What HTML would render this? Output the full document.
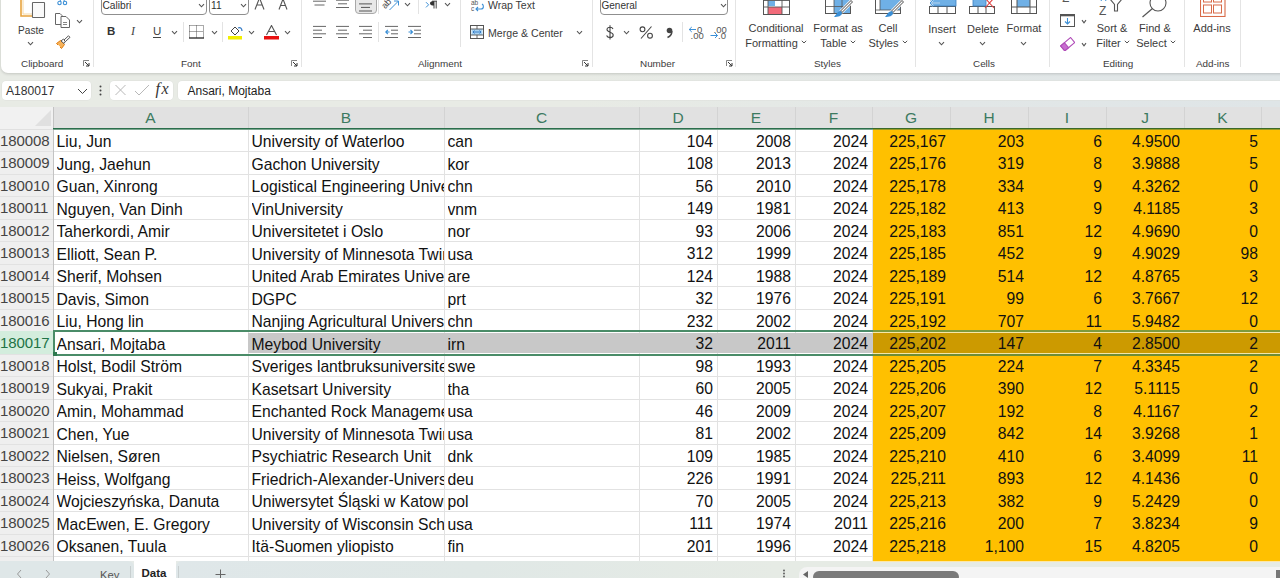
<!DOCTYPE html><html><head><meta charset="utf-8"><title>Excel</title><style>
*{box-sizing:border-box;margin:0;padding:0}
html,body{width:1280px;height:578px;overflow:hidden;background:linear-gradient(90deg,#e8ebe5 0%,#e8ebe5 45%,#e2e7e7 75%,#dfe5e7 100%);font-family:"Liberation Sans",sans-serif;}
.a{position:absolute}
.rib{position:absolute;left:1px;top:-10px;width:1290px;height:82.5px;background:#fff;border-radius:0 0 7px 7px;box-shadow:0 1px 3px rgba(0,0,0,.16)}
.lbl{position:absolute;font-size:9.9px;color:#3b3b3b;white-space:nowrap;line-height:12px}
.bl{position:absolute;font-size:11px;color:#3b3b3b;white-space:nowrap;line-height:13px;text-align:center}
.sep{position:absolute;width:1px;background:#e4e4e4}
.chev{position:absolute}
.cell{position:absolute;white-space:nowrap;overflow:hidden;font-size:15.7px;color:#111;line-height:22px}
.num{text-align:right}
.ctr{text-align:center}
.rh{position:absolute;left:0;width:53px;font-size:15px;color:#444;line-height:22px;text-align:left;padding-left:0;letter-spacing:-0.1px;white-space:nowrap}
.ch{position:absolute;top:107px;height:21px;font-size:15.5px;color:#3c7a60;line-height:21px;text-align:center}
</style></head><body>
<div class="rib"></div>
<div class="sep" style="left:93px;top:0;height:67px"></div>
<div class="sep" style="left:301px;top:0;height:67px"></div>
<div class="sep" style="left:592px;top:0;height:67px"></div>
<div class="sep" style="left:735px;top:0;height:67px"></div>
<div class="sep" style="left:915px;top:0;height:67px"></div>
<div class="sep" style="left:1049px;top:0;height:67px"></div>
<div class="sep" style="left:1184px;top:0;height:67px"></div>
<div class="sep" style="left:1240px;top:0;height:67px"></div>
<div class="sep" style="left:183px;top:22px;height:20px;background:#e3e3e3"></div>
<div class="sep" style="left:222px;top:22px;height:20px;background:#e3e3e3"></div>
<div class="sep" style="left:378px;top:0px;height:14px;background:#e3e3e3"></div>
<div class="sep" style="left:378px;top:22px;height:20px;background:#e3e3e3"></div>
<div class="sep" style="left:418px;top:0px;height:14px;background:#e3e3e3"></div>
<div class="sep" style="left:460px;top:0px;height:47px;background:#e3e3e3"></div>
<div class="sep" style="left:682px;top:22px;height:20px;background:#e3e3e3"></div>
<div class="lbl" style="left:21px;top:58px">Clipboard</div>
<div class="lbl" style="left:181px;top:58px">Font</div>
<div class="lbl" style="left:418px;top:58px">Alignment</div>
<div class="lbl" style="left:640px;top:58px">Number</div>
<div class="lbl" style="left:814px;top:58px">Styles</div>
<div class="lbl" style="left:973px;top:58px">Cells</div>
<div class="lbl" style="left:1103px;top:58px">Editing</div>
<div class="lbl" style="left:1196px;top:58px">Add-ins</div>
<svg class="a" style="left:83px;top:60px" width="7" height="7" viewBox="0 0 7 7"><path d="M0.5 6V0.5H6" fill="none" stroke="#777" stroke-width="0.9"/><path d="M2 2L6 6M6 3V6H3" fill="none" stroke="#333" stroke-width="1"/></svg>
<svg class="a" style="left:291px;top:60px" width="7" height="7" viewBox="0 0 7 7"><path d="M0.5 6V0.5H6" fill="none" stroke="#777" stroke-width="0.9"/><path d="M2 2L6 6M6 3V6H3" fill="none" stroke="#333" stroke-width="1"/></svg>
<svg class="a" style="left:582px;top:60px" width="7" height="7" viewBox="0 0 7 7"><path d="M0.5 6V0.5H6" fill="none" stroke="#777" stroke-width="0.9"/><path d="M2 2L6 6M6 3V6H3" fill="none" stroke="#333" stroke-width="1"/></svg>
<svg class="a" style="left:726px;top:60px" width="7" height="7" viewBox="0 0 7 7"><path d="M0.5 6V0.5H6" fill="none" stroke="#777" stroke-width="0.9"/><path d="M2 2L6 6M6 3V6H3" fill="none" stroke="#333" stroke-width="1"/></svg>
<svg class="a" style="left:18px;top:0" width="30" height="20" viewBox="0 0 30 20"><path d="M3 0V16H14" fill="none" stroke="#e8a33d" stroke-width="1.6"/><path d="M5 -2V14H14" fill="none" stroke="#f6d9a6" stroke-width="1"/><rect x="14.5" y="2.5" width="12" height="15" fill="#fff" stroke="#666" stroke-width="1.1" rx="0.5"/><rect x="15.5" y="3.5" width="10" height="13" fill="#fafafa"/></svg>
<div class="bl" style="left:17px;top:23.5px;width:28px;font-size:10.1px">Paste</div>
<svg class="a" style="left:27px;top:41px" width="7" height="5" viewBox="0 0 7 5"><path d="M1 1.2 L3.5 3.8 L6 1.2" fill="none" stroke="#555" stroke-width="1.1"/></svg>
<svg class="a" style="left:57px;top:0" width="11" height="6" viewBox="0 0 11 6"><circle cx="2.5" cy="3" r="1.7" fill="none" stroke="#3b8fd6" stroke-width="1.1"/><circle cx="8" cy="3" r="1.7" fill="none" stroke="#3b8fd6" stroke-width="1.1"/><path d="M3 0L4 1.5M7.5 0L6.5 1.5" stroke="#3b8fd6" stroke-width="1"/></svg>
<svg class="a" style="left:55px;top:13px" width="16" height="15" viewBox="0 0 16 15"><path d="M0.5 0.5H5L7 2.5V11.5H0.5Z" fill="#fff" stroke="#666" stroke-width="1"/><path d="M6 3.5H11L14.5 7V14.5H6Z" fill="#fff" stroke="#666" stroke-width="1"/><path d="M8 9.5H12M8 11.5H12" stroke="#777" stroke-width="0.9"/></svg>
<svg class="a" style="left:76px;top:19px" width="7" height="5" viewBox="0 0 7 5"><path d="M1 1.2 L3.5 3.8 L6 1.2" fill="none" stroke="#555" stroke-width="1.1"/></svg>
<svg class="a" style="left:55px;top:35px" width="16" height="15" viewBox="0 0 16 15"><path d="M1.5 8.5L6.5 13.5L9.5 9.5L5.5 5.5Z" fill="#f6b25a" stroke="#e07d10" stroke-width="1"/><path d="M3 10L5 12" stroke="#fff" stroke-width="0.9"/><path d="M6 6L8.5 4L10.5 6L9 8.5Z" fill="#fff" stroke="#555" stroke-width="1"/><path d="M9 5L13.5 0.8L15 2.3L10.5 6.5Z" fill="#fff" stroke="#555" stroke-width="1"/></svg>
<div class="a" style="left:101px;top:-6px;width:106px;height:20.5px;border:1px solid #8f8f8f;border-radius:4px;background:#fff"></div>
<div class="a" style="left:102.5px;top:-1.5px;font-size:10.2px;color:#333;line-height:13px">Calibri</div>
<svg class="a" style="left:198px;top:3px" width="7" height="5" viewBox="0 0 7 5"><path d="M1 1.2 L3.5 3.8 L6 1.2" fill="none" stroke="#555" stroke-width="1.1"/></svg>
<div class="a" style="left:209px;top:-6px;width:40px;height:20.5px;border:1px solid #8f8f8f;border-radius:4px;background:#fff"></div>
<div class="a" style="left:211px;top:-1.5px;font-size:10.2px;color:#333;line-height:13px">11</div>
<svg class="a" style="left:240px;top:3px" width="7" height="5" viewBox="0 0 7 5"><path d="M1 1.2 L3.5 3.8 L6 1.2" fill="none" stroke="#555" stroke-width="1.1"/></svg>
<svg class="a" style="left:254px;top:0" width="36" height="10" viewBox="0 0 36 10"><path d="M1 9.5L5.5 -2L10 9.5M2.8 5H8.2" fill="none" stroke="#555" stroke-width="1.1"/><path d="M9 0L10.5 -1.5L12 0" fill="none" stroke="#555" stroke-width="0.9"/><path d="M25 9.5L29 -1L33 9.5M26.5 5.5H31.5" fill="none" stroke="#555" stroke-width="1.1"/></svg>
<div class="a" style="left:107px;top:24px;font-size:11.5px;font-weight:bold;color:#333;line-height:14px">B</div>
<div class="a" style="left:131px;top:24px;font-size:12px;font-style:italic;color:#444;line-height:14px;font-family:'Liberation Serif',serif">I</div>
<div class="a" style="left:153px;top:24px;font-size:11.5px;color:#444;line-height:14px">U</div>
<div class="a" style="left:153px;top:36.6px;width:8px;height:1px;background:#444"></div>
<svg class="a" style="left:171px;top:30px" width="7" height="5" viewBox="0 0 7 5"><path d="M1 1.2 L3.5 3.8 L6 1.2" fill="none" stroke="#555" stroke-width="1.1"/></svg>
<svg class="a" style="left:189px;top:25px" width="15" height="14" viewBox="0 0 15 14"><path d="M0.5 0.5H14.5V13M0.5 0.5V13M7.5 0.5V13M0.5 6.5H14.5" fill="none" stroke="#555" stroke-width="1" stroke-dasharray="1 1"/><path d="M0 13H15" stroke="#333" stroke-width="1.4"/></svg>
<svg class="a" style="left:211px;top:30px" width="7" height="5" viewBox="0 0 7 5"><path d="M1 1.2 L3.5 3.8 L6 1.2" fill="none" stroke="#555" stroke-width="1.1"/></svg>
<svg class="a" style="left:228px;top:25px" width="16" height="15" viewBox="0 0 16 15"><path d="M3 6L7 2L11 6L7 10Z" fill="#fff" stroke="#444" stroke-width="1"/><path d="M10 3C12 2 14 3 14 6" fill="none" stroke="#2f77c4" stroke-width="1.2"/><rect x="0" y="11" width="14" height="3.5" fill="#f2ef00"/></svg>
<svg class="a" style="left:248px;top:30px" width="7" height="5" viewBox="0 0 7 5"><path d="M1 1.2 L3.5 3.8 L6 1.2" fill="none" stroke="#555" stroke-width="1.1"/></svg>
<svg class="a" style="left:264px;top:25px" width="16" height="15" viewBox="0 0 16 15"><path d="M2.5 10L7.5 0.5L12.5 10M4.5 6.5H10.5" fill="none" stroke="#555" stroke-width="1.1"/><rect x="0" y="11" width="15" height="3.5" fill="#e81010"/></svg>
<svg class="a" style="left:284px;top:30px" width="7" height="5" viewBox="0 0 7 5"><path d="M1 1.2 L3.5 3.8 L6 1.2" fill="none" stroke="#555" stroke-width="1.1"/></svg>
<svg class="a" style="left:313px;top:-4px" width="15" height="15" viewBox="0 0 15 15"><path d="M0 1.5H13" stroke="#666" stroke-width="1"/><path d="M0 5.2H13" stroke="#666" stroke-width="1"/><path d="M1.5 9H11.5" stroke="#666" stroke-width="1"/></svg>
<svg class="a" style="left:336px;top:-4px" width="15" height="15" viewBox="0 0 15 15"><path d="M0 4.2H13" stroke="#666" stroke-width="1"/><path d="M2 7.8H11" stroke="#666" stroke-width="1"/><path d="M0 11.5H13" stroke="#666" stroke-width="1"/></svg>
<div class="a" style="left:355px;top:-6px;width:22px;height:20px;background:#e8e8e8;border:1px solid #a8a8a8;border-radius:4px"></div>
<svg class="a" style="left:359px;top:-1px" width="15" height="15" viewBox="0 0 15 15"><path d="M0 4.9H13" stroke="#555" stroke-width="1"/><path d="M2 8.4H11" stroke="#555" stroke-width="1"/><path d="M0 12H13" stroke="#555" stroke-width="1"/></svg>
<svg class="a" style="left:382px;top:-4px" width="20" height="16" viewBox="0 0 20 16"><text x="-0.5" y="11" font-size="9" fill="#444" font-family="Liberation Sans" transform="rotate(-48 4 8)">ab</text><path d="M7.5 14L16.5 5M12 5H16.5V9.5" fill="none" stroke="#3b8fd6" stroke-width="1"/></svg>
<svg class="a" style="left:404px;top:2px" width="7" height="5" viewBox="0 0 7 5"><path d="M1 1.2 L3.5 3.8 L6 1.2" fill="none" stroke="#555" stroke-width="1.1"/></svg>
<svg class="a" style="left:425px;top:0px" width="14" height="10" viewBox="0 0 14 10"><path d="M1 2.2L3.6 4.8L1 7.4" fill="none" stroke="#3b8fd6" stroke-width="1"/><path d="M9 1.2V8.5M11.2 1.2V8.5M7 1.2H12" stroke="#444" stroke-width="1"/><path d="M9 1.2H7.5C5.8 1.2 5 2.2 5 3.3C5 4.4 5.8 5.4 7.5 5.4H9Z" fill="#333"/></svg>
<svg class="a" style="left:444px;top:2px" width="7" height="5" viewBox="0 0 7 5"><path d="M1 1.2 L3.5 3.8 L6 1.2" fill="none" stroke="#555" stroke-width="1.1"/></svg>
<svg class="a" style="left:313px;top:24px" width="15" height="15" viewBox="0 0 15 15"><path d="M0 2.4H13" stroke="#666" stroke-width="1"/><path d="M0 6.2H9" stroke="#666" stroke-width="1"/><path d="M0 9.8H13" stroke="#666" stroke-width="1"/><path d="M0 13.5H9" stroke="#666" stroke-width="1"/></svg>
<svg class="a" style="left:336px;top:24px" width="15" height="15" viewBox="0 0 15 15"><path d="M0 2.4H13" stroke="#666" stroke-width="1"/><path d="M2 6.2H11" stroke="#666" stroke-width="1"/><path d="M0 9.8H13" stroke="#666" stroke-width="1"/><path d="M2 13.5H11" stroke="#666" stroke-width="1"/></svg>
<svg class="a" style="left:359px;top:24px" width="15" height="15" viewBox="0 0 15 15"><path d="M0 2.4H13" stroke="#666" stroke-width="1"/><path d="M4 6.2H13" stroke="#666" stroke-width="1"/><path d="M0 9.8H13" stroke="#666" stroke-width="1"/><path d="M4 13.5H13" stroke="#666" stroke-width="1"/></svg>
<svg class="a" style="left:385px;top:24px" width="15" height="15" viewBox="0 0 15 15"><path d="M0 2.4H13M6 6.2H13M6 9.8H13M0 13.5H13" stroke="#666" stroke-width="1"/><path d="M4.5 8H0.8M2.8 6L0.8 8L2.8 10" fill="none" stroke="#3b8fd6" stroke-width="1.1"/></svg>
<svg class="a" style="left:408px;top:24px" width="15" height="15" viewBox="0 0 15 15"><path d="M0 2.4H13M6 6.2H13M6 9.8H13M0 13.5H13" stroke="#666" stroke-width="1"/><path d="M0.5 8H4.5M2.5 6L4.5 8L2.5 10" fill="none" stroke="#3b8fd6" stroke-width="1.1"/></svg>
<svg class="a" style="left:471px;top:0" width="14" height="12" viewBox="0 0 14 12"><text x="0" y="5" font-size="6.5" fill="#555" font-family="Liberation Sans">ab</text><text x="0" y="11" font-size="6.5" fill="#555" font-family="Liberation Sans">c</text><path d="M11 4C13 5 13 9 10 9H5M7 7L5 9L7 11" fill="none" stroke="#3b8fd6" stroke-width="1.1"/></svg>
<div class="bl" style="left:488px;top:-1px;font-size:10.5px;text-align:left">Wrap Text</div>
<svg class="a" style="left:470px;top:25px" width="14" height="14" viewBox="0 0 14 14"><rect x="0.5" y="0.5" width="13" height="13" fill="#fff" stroke="#555" stroke-width="1"/><rect x="1.5" y="4" width="11" height="6" fill="#a9d3f2"/><path d="M0.5 4H13.5M0.5 10H13.5M7 0.5V4M7 10V13.5" stroke="#555" stroke-width="0.9"/><path d="M3 7H11M4.5 5.5L3 7L4.5 8.5M9.5 5.5L11 7L9.5 8.5" fill="none" stroke="#2f77c4" stroke-width="0.9"/></svg>
<div class="bl" style="left:488px;top:27px;font-size:10.6px;text-align:left">Merge &amp; Center</div>
<svg class="a" style="left:576px;top:30px" width="7" height="5" viewBox="0 0 7 5"><path d="M1 1.2 L3.5 3.8 L6 1.2" fill="none" stroke="#555" stroke-width="1.1"/></svg>
<div class="a" style="left:600px;top:-6px;width:128px;height:20.5px;border:1px solid #8f8f8f;border-radius:4px;background:#fff"></div>
<div class="a" style="left:601.5px;top:-1.5px;font-size:10px;color:#333;line-height:13px">General</div>
<svg class="a" style="left:720px;top:3px" width="7" height="5" viewBox="0 0 7 5"><path d="M1 1.2 L3.5 3.8 L6 1.2" fill="none" stroke="#555" stroke-width="1.1"/></svg>
<svg class="a" style="left:605px;top:25px" width="10" height="15" viewBox="0 0 10 15"><path d="M8 4C7.5 2.8 6.3 2.2 5 2.2C3.2 2.2 2 3.2 2 4.6C2 7.8 8.2 6.6 8.2 10C8.2 11.5 6.9 12.6 5 12.6C3.3 12.6 2 11.8 1.6 10.5M5 0.3V14.6" fill="none" stroke="#444" stroke-width="1.1"/></svg>
<svg class="a" style="left:623px;top:30px" width="7" height="5" viewBox="0 0 7 5"><path d="M1 1.2 L3.5 3.8 L6 1.2" fill="none" stroke="#555" stroke-width="1.1"/></svg>
<svg class="a" style="left:639px;top:26px" width="15" height="13" viewBox="0 0 15 13"><circle cx="3.5" cy="3.3" r="2.4" fill="none" stroke="#444" stroke-width="1.1"/><circle cx="11" cy="9.7" r="2.4" fill="none" stroke="#444" stroke-width="1.1"/><path d="M12.5 0.5L2 12.5" stroke="#444" stroke-width="1.1"/></svg>
<svg class="a" style="left:665px;top:27px" width="9" height="12" viewBox="0 0 9 12"><circle cx="4.5" cy="3.5" r="2.8" fill="#444"/><path d="M6.8 4C7 7 5 9.5 2.5 10.5" fill="none" stroke="#444" stroke-width="1.6"/></svg>
<svg class="a" style="left:688px;top:24px" width="16" height="17" viewBox="0 0 16 17"><path d="M8 5.5H1.2M3.8 3L1.2 5.5L3.8 8" fill="none" stroke="#3b8fd6" stroke-width="1"/><text x="9" y="8.5" font-size="9.5" fill="#555" font-family="Liberation Sans">0</text><text x="2.5" y="15" font-size="9.5" fill="#555" font-family="Liberation Sans">.00</text></svg>
<svg class="a" style="left:710px;top:24px" width="17" height="17" viewBox="0 0 17 17"><text x="3.5" y="8.5" font-size="9.5" fill="#555" font-family="Liberation Sans">.00</text><path d="M0.5 11.5H7.5M5 9L7.5 11.5L5 14" fill="none" stroke="#3b8fd6" stroke-width="1"/><text x="8" y="15" font-size="9.5" fill="#555" font-family="Liberation Sans">.0</text></svg>
<svg class="a" style="left:763px;top:0" width="27" height="15" viewBox="0 0 27 15"><rect x="0.5" y="-3" width="26" height="17.5" fill="#fff" stroke="#555" stroke-width="1"/><rect x="5" y="1" width="7" height="5" fill="#6fb0e6"/><rect x="5" y="7" width="14" height="7" fill="#f26b7a"/><rect x="5" y="-3" width="14" height="3" fill="#f26b7a"/><path d="M5 -3V14.5M19 -3V14.5M0.5 7H26.5M0.5 0.5H26.5" stroke="#555" stroke-width="0.9"/></svg>
<div class="bl" style="left:745px;top:21.6px;width:62px">Conditional</div>
<div class="bl" style="left:744px;top:36.6px;width:64px">Formatting <svg width="6" height="4" viewBox="0 0 6 4" style="vertical-align:3px"><path d="M0.8 0.8L3 3L5.2 0.8" fill="none" stroke="#555" stroke-width="1"/></svg></div>
<svg class="a" style="left:825px;top:0" width="28" height="18" viewBox="0 0 28 18"><rect x="0.5" y="-3" width="25" height="16.5" fill="#fff" stroke="#555" stroke-width="1"/><rect x="9" y="-3" width="16" height="16" fill="#6fb0e6"/><path d="M9 -3V13.5M17 -3V13.5M0.5 6.5H25.5M0.5 -0.5H25.5" stroke="#555" stroke-width="0.8"/><path d="M27 1L16 12" stroke="#fff" stroke-width="4.5"/><path d="M27 1L16 12" stroke="#555" stroke-width="2.8"/><path d="M26.5 1.5L16.5 11.5" stroke="#fff" stroke-width="1.2"/><path d="M16 11C13 11 12 13 9 17C13 17 17 16 17 13Z" fill="#3b8fd6"/></svg>
<div class="bl" style="left:812px;top:21.6px;width:52px">Format as</div>
<div class="bl" style="left:818px;top:36.6px;width:40px">Table <svg width="6" height="4" viewBox="0 0 6 4" style="vertical-align:3px"><path d="M0.8 0.8L3 3L5.2 0.8" fill="none" stroke="#555" stroke-width="1"/></svg></div>
<svg class="a" style="left:875px;top:0" width="29" height="18" viewBox="0 0 29 18"><rect x="0.5" y="-3" width="25" height="16.5" fill="#fff" stroke="#555" stroke-width="1"/><rect x="5" y="-3" width="20.5" height="13" fill="#6fb0e6" stroke="#555" stroke-width="0.8"/><path d="M0.5 10H5" stroke="#555" stroke-width="0.8"/><path d="M28 1L17 12" stroke="#fff" stroke-width="4.5"/><path d="M28 1L17 12" stroke="#555" stroke-width="2.8"/><path d="M27.5 1.5L17.5 11.5" stroke="#fff" stroke-width="1.2"/><path d="M17 11C14 11 13 13 10 17C14 17 18 16 18 13Z" fill="#3b8fd6"/></svg>
<div class="bl" style="left:870px;top:21.6px;width:36px">Cell</div>
<div class="bl" style="left:866px;top:36.6px;width:44px">Styles <svg width="6" height="4" viewBox="0 0 6 4" style="vertical-align:3px"><path d="M0.8 0.8L3 3L5.2 0.8" fill="none" stroke="#555" stroke-width="1"/></svg></div>
<svg class="a" style="left:928px;top:0" width="29" height="15" viewBox="0 0 29 15"><rect x="1.5" y="6.5" width="26" height="7" fill="#fff" stroke="#555" stroke-width="1"/><path d="M10 6.5V13.5M19 6.5V13.5" stroke="#555" stroke-width="1"/><rect x="3" y="-3" width="25" height="9" fill="#6fb0e6" stroke="#3b7fc0" stroke-width="0.8"/><path d="M12 3H2M5 0L2 3L5 6" fill="none" stroke="#fff" stroke-width="1.6"/><path d="M12 3H2M5 0L2 3L5 6" fill="none" stroke="#3b8fd6" stroke-width="0.9"/></svg>
<div class="bl" style="left:924px;top:22.8px;width:36px">Insert</div>
<svg class="a" style="left:938px;top:41px" width="7" height="5" viewBox="0 0 7 5"><path d="M1 1.2 L3.5 3.8 L6 1.2" fill="none" stroke="#555" stroke-width="1.1"/></svg>
<svg class="a" style="left:969px;top:0" width="27" height="15" viewBox="0 0 27 15"><rect x="0.5" y="6.5" width="25" height="7" fill="#fff" stroke="#555" stroke-width="1"/><path d="M9 6.5V13.5M17 6.5V13.5" stroke="#555" stroke-width="1"/><rect x="4" y="-3" width="13" height="9" fill="#6fb0e6" stroke="#3b7fc0" stroke-width="0.8"/><path d="M16 -2L25 8M25 -2L16 8" stroke="#e04040" stroke-width="1.1"/></svg>
<div class="bl" style="left:964px;top:22.8px;width:38px">Delete</div>
<svg class="a" style="left:979px;top:41px" width="7" height="5" viewBox="0 0 7 5"><path d="M1 1.2 L3.5 3.8 L6 1.2" fill="none" stroke="#555" stroke-width="1.1"/></svg>
<svg class="a" style="left:1011px;top:0" width="26" height="15" viewBox="0 0 26 15"><rect x="0.5" y="-3" width="25" height="16.5" fill="#fff" stroke="#555" stroke-width="1"/><rect x="6" y="-3" width="13" height="10" fill="#6fb0e6"/><path d="M6 -3V13.5M19 -3V13.5M0.5 7H25.5" stroke="#555" stroke-width="1"/></svg>
<div class="bl" style="left:1002px;top:21.6px;width:44px">Format</div>
<svg class="a" style="left:1020px;top:41px" width="7" height="5" viewBox="0 0 7 5"><path d="M1 1.2 L3.5 3.8 L6 1.2" fill="none" stroke="#555" stroke-width="1.1"/></svg>
<div class="a" style="left:1062px;top:-9px;font-size:12px;color:#555;line-height:14px">&#931;</div>
<svg class="a" style="left:1060px;top:14px" width="16" height="13" viewBox="0 0 16 13"><rect x="0.5" y="0.5" width="14" height="12" fill="#fff" stroke="#555" stroke-width="1"/><path d="M0.5 1.5H14.5" stroke="#555" stroke-width="1.6"/><path d="M7.5 4V10M5 7.5L7.5 10L10 7.5" fill="none" stroke="#3b8fd6" stroke-width="1.1"/></svg>
<svg class="a" style="left:1081px;top:18.5px" width="6" height="5" viewBox="0 0 6 5"><path d="M1 1.2 L3.0 3.8 L5 1.2" fill="none" stroke="#555" stroke-width="1.1"/></svg>
<svg class="a" style="left:1060px;top:37px" width="15" height="14" viewBox="0 0 15 14"><g transform="rotate(-40 7.5 7)"><rect x="1" y="4" width="13" height="6.5" fill="#fff" stroke="#b04cb8" stroke-width="1.1"/><rect x="1" y="4" width="5" height="6.5" fill="#c86ed0" stroke="#b04cb8" stroke-width="1.1"/></g></svg>
<svg class="a" style="left:1081px;top:41.5px" width="6" height="5" viewBox="0 0 6 5"><path d="M1 1.2 L3.0 3.8 L5 1.2" fill="none" stroke="#555" stroke-width="1.1"/></svg>
<svg class="a" style="left:1099px;top:0" width="28" height="16" viewBox="0 0 28 16"><text x="0" y="14.5" font-size="12" fill="#555" font-family="Liberation Sans">Z</text><path d="M2 1L4.5 -4L7 1" fill="none" stroke="#3b8fd6" stroke-width="1"/><path d="M11 -1L15.5 4.5V11H18.5V4.5L23 -1" fill="#fff" stroke="#555" stroke-width="1.1"/></svg>
<div class="bl" style="left:1093px;top:21.6px;width:38px">Sort &amp;</div>
<div class="bl" style="left:1093px;top:36.6px;width:40px">Filter <svg width="6" height="4" viewBox="0 0 6 4" style="vertical-align:3px"><path d="M0.8 0.8L3 3L5.2 0.8" fill="none" stroke="#555" stroke-width="1"/></svg></div>
<svg class="a" style="left:1141px;top:0" width="28" height="18" viewBox="0 0 28 18"><circle cx="17" cy="3" r="8" fill="#fff" stroke="#555" stroke-width="1.1"/><path d="M11.5 8.5L1.5 17" stroke="#555" stroke-width="1.2"/></svg>
<div class="bl" style="left:1136px;top:21.6px;width:38px">Find &amp;</div>
<div class="bl" style="left:1134px;top:36.6px;width:44px">Select <svg width="6" height="4" viewBox="0 0 6 4" style="vertical-align:3px"><path d="M0.8 0.8L3 3L5.2 0.8" fill="none" stroke="#555" stroke-width="1"/></svg></div>
<svg class="a" style="left:1200px;top:0" width="26" height="17" viewBox="0 0 26 17"><rect x="0.5" y="-3" width="24.5" height="19.5" fill="#fff" stroke="#d86a48" stroke-width="1.1"/><rect x="3.5" y="-1" width="8" height="3" fill="none" stroke="#d86a48" stroke-width="1"/><rect x="13.5" y="-1" width="8" height="3" fill="none" stroke="#d86a48" stroke-width="1"/><rect x="3.5" y="5" width="8" height="8" fill="none" stroke="#d86a48" stroke-width="1"/><rect x="13.5" y="5" width="8" height="8" fill="none" stroke="#d86a48" stroke-width="1"/></svg>
<div class="bl" style="left:1190px;top:21.6px;width:44px">Add-ins</div>
<div class="a" style="left:2px;top:81px;width:89px;height:19px;background:#fff;border-radius:4px;box-shadow:0 0 0 0.5px #dde0dc"></div>
<div class="a" style="left:6px;top:84px;font-size:12.1px;color:#333;line-height:15px">A180017</div>
<svg class="a" style="left:77px;top:88px" width="11" height="7" viewBox="0 0 11 7"><path d="M1 1L5.5 5.5L10 1" fill="none" stroke="#444" stroke-width="1"/></svg>
<svg class="a" style="left:99px;top:85px" width="3" height="11" viewBox="0 0 3 11"><circle cx="1.5" cy="1.5" r="1" fill="#444"/><circle cx="1.5" cy="5.5" r="1" fill="#444"/><circle cx="1.5" cy="9.5" r="1" fill="#444"/></svg>
<div class="a" style="left:110px;top:81px;width:63px;height:19px;background:#fff;border-radius:4px;box-shadow:0 0 0 0.5px #dde0dc"></div>
<svg class="a" style="left:114px;top:84px" width="14" height="12" viewBox="0 0 14 12"><path d="M1.5 1L11.5 11M11.5 1L1.5 11" stroke="#b8b8b8" stroke-width="1"/></svg>
<svg class="a" style="left:134px;top:84px" width="16" height="12" viewBox="0 0 16 12"><path d="M1 7L5 11L15 1" fill="none" stroke="#b8b8b8" stroke-width="1"/></svg>
<div class="a" style="left:155.5px;top:80px;font-size:16px;font-style:italic;color:#333;line-height:18px;letter-spacing:1.5px;font-family:'Liberation Serif',serif">fx</div>
<div class="a" style="left:178px;top:81px;width:1110px;height:19px;background:#fff;border-radius:4px;box-shadow:0 0 0 0.5px #dde0dc"></div>
<div class="a" style="left:187.5px;top:84px;font-size:12px;color:#222;line-height:15px">Ansari, Mojtaba</div>
<div class="a" style="left:53px;top:107px;width:1227px;height:21px;background:#e1e1e1"></div>
<div class="a" style="left:0;top:107px;width:53px;height:23px;background:#f1f1f1;border-bottom:1px solid #e0e0e0"></div>
<svg class="a" style="left:35px;top:110px" width="17" height="17" viewBox="0 0 17 17"><path d="M16 0V16H0Z" fill="#e0e0e0"/></svg>
<div class="a" style="left:248px;top:107px;width:1px;height:21px;background:#d3d3d3"></div>
<div class="a" style="left:444px;top:107px;width:1px;height:21px;background:#d3d3d3"></div>
<div class="a" style="left:639px;top:107px;width:1px;height:21px;background:#d3d3d3"></div>
<div class="a" style="left:717px;top:107px;width:1px;height:21px;background:#d3d3d3"></div>
<div class="a" style="left:795px;top:107px;width:1px;height:21px;background:#d3d3d3"></div>
<div class="a" style="left:872px;top:107px;width:1px;height:21px;background:#d3d3d3"></div>
<div class="a" style="left:950px;top:107px;width:1px;height:21px;background:#d3d3d3"></div>
<div class="a" style="left:1028px;top:107px;width:1px;height:21px;background:#d3d3d3"></div>
<div class="a" style="left:1106px;top:107px;width:1px;height:21px;background:#d3d3d3"></div>
<div class="a" style="left:1184px;top:107px;width:1px;height:21px;background:#d3d3d3"></div>
<div class="a" style="left:1261px;top:107px;width:1px;height:21px;background:#d3d3d3"></div>
<div class="ch" style="left:53px;width:195px">A</div>
<div class="ch" style="left:248px;width:196px">B</div>
<div class="ch" style="left:444px;width:195px">C</div>
<div class="ch" style="left:639px;width:78px">D</div>
<div class="ch" style="left:717px;width:78px">E</div>
<div class="ch" style="left:795px;width:77px">F</div>
<div class="ch" style="left:872px;width:78px">G</div>
<div class="ch" style="left:950px;width:78px">H</div>
<div class="ch" style="left:1028px;width:78px">I</div>
<div class="ch" style="left:1106px;width:78px">J</div>
<div class="ch" style="left:1184px;width:77px">K</div>
<div class="ch" style="left:1261px;width:79px">L</div>
<div class="a" style="left:53px;top:130px;width:1227px;height:431px;background:#fff"></div>
<div class="a" style="left:0;top:130px;width:53px;height:431px;background:#efefef"></div>
<div class="a" style="left:0;top:151.0px;width:872px;height:1px;background:#e2e2e2"></div>
<div class="a" style="left:0;top:173.5px;width:872px;height:1px;background:#e2e2e2"></div>
<div class="a" style="left:0;top:196.0px;width:872px;height:1px;background:#e2e2e2"></div>
<div class="a" style="left:0;top:218.5px;width:872px;height:1px;background:#e2e2e2"></div>
<div class="a" style="left:0;top:241.0px;width:872px;height:1px;background:#e2e2e2"></div>
<div class="a" style="left:0;top:263.5px;width:872px;height:1px;background:#e2e2e2"></div>
<div class="a" style="left:0;top:286.0px;width:872px;height:1px;background:#e2e2e2"></div>
<div class="a" style="left:0;top:308.5px;width:872px;height:1px;background:#e2e2e2"></div>
<div class="a" style="left:0;top:331.0px;width:872px;height:1px;background:#e2e2e2"></div>
<div class="a" style="left:0;top:353.5px;width:872px;height:1px;background:#e2e2e2"></div>
<div class="a" style="left:0;top:376.0px;width:872px;height:1px;background:#e2e2e2"></div>
<div class="a" style="left:0;top:398.5px;width:872px;height:1px;background:#e2e2e2"></div>
<div class="a" style="left:0;top:421.0px;width:872px;height:1px;background:#e2e2e2"></div>
<div class="a" style="left:0;top:443.5px;width:872px;height:1px;background:#e2e2e2"></div>
<div class="a" style="left:0;top:466.0px;width:872px;height:1px;background:#e2e2e2"></div>
<div class="a" style="left:0;top:488.5px;width:872px;height:1px;background:#e2e2e2"></div>
<div class="a" style="left:0;top:511.0px;width:872px;height:1px;background:#e2e2e2"></div>
<div class="a" style="left:0;top:533.5px;width:872px;height:1px;background:#e2e2e2"></div>
<div class="a" style="left:0;top:556.0px;width:872px;height:1px;background:#e2e2e2"></div>
<div class="a" style="left:248px;top:130px;width:1px;height:431px;background:#e2e2e2"></div>
<div class="a" style="left:444px;top:130px;width:1px;height:431px;background:#e2e2e2"></div>
<div class="a" style="left:639px;top:130px;width:1px;height:431px;background:#e2e2e2"></div>
<div class="a" style="left:717px;top:130px;width:1px;height:431px;background:#e2e2e2"></div>
<div class="a" style="left:795px;top:130px;width:1px;height:431px;background:#e2e2e2"></div>
<div class="a" style="left:872px;top:130px;width:1px;height:431px;background:#e2e2e2"></div>
<div class="a" style="left:950px;top:130px;width:1px;height:431px;background:#e2e2e2"></div>
<div class="a" style="left:53px;top:107px;width:1px;height:454px;background:#c3c3c3"></div>
<div class="a" style="left:873px;top:130px;width:407px;height:431px;background:#ffc000"></div>
<div class="a" style="left:53px;top:128px;width:820px;height:1px;background:#2b6e4c"></div>
<div class="a" style="left:53px;top:129px;width:820px;height:1px;background:#7aa68f"></div>
<div class="a" style="left:873px;top:128px;width:407px;height:1px;background:#3b6a2a"></div>
<div class="a" style="left:873px;top:129px;width:407px;height:1px;background:#9a9a20"></div>
<div class="a" style="left:0;top:331px;width:53px;height:23px;background:#d3eddd"></div>
<div class="a" style="left:248px;top:333px;width:625px;height:20px;background:#c8c8c8"></div>
<div class="a" style="left:873px;top:332px;width:407px;height:22px;background:#f6e7a6"></div>
<div class="a" style="left:873px;top:333px;width:407px;height:19.5px;background:#cc9a00"></div>
<div class="a" style="left:53px;top:330px;width:820px;height:2px;background:#4a8c68"></div>
<div class="a" style="left:873px;top:330px;width:407px;height:2px;background:#7c9a3c"></div>
<div class="a" style="left:53px;top:354px;width:820px;height:1.5px;background:#4a8c68"></div>
<div class="a" style="left:873px;top:354px;width:407px;height:1.5px;background:#6f8d35"></div>
<div class="a" style="left:53px;top:330px;width:1.6px;height:25px;background:#4a8c68"></div>
<div class="a" style="left:53px;top:352px;width:4px;height:4px;background:#2f7a50"></div>
<div class="rh" style="top:129.5px;color:#444">180008</div>
<div class="cell" style="left:56.5px;top:131.0px;width:191px">Liu, Jun</div>
<div class="cell" style="left:251.5px;top:131.0px;width:192px">University of Waterloo</div>
<div class="cell" style="left:447.5px;top:131.0px;width:191px">can</div>
<div class="cell num" style="left:639px;top:130.5px;width:74px">104</div>
<div class="cell num" style="left:717px;top:130.5px;width:74px">2008</div>
<div class="cell num" style="left:795px;top:130.5px;width:73px">2024</div>
<div class="cell num" style="left:872px;top:130.5px;width:74px">225,167</div>
<div class="cell num" style="left:950px;top:130.5px;width:74px">203</div>
<div class="cell num" style="left:1028px;top:130.5px;width:74px">6</div>
<div class="cell num" style="left:1106px;top:130.5px;width:74px">4.9500</div>
<div class="cell num" style="left:1184px;top:130.5px;width:74px">5</div>
<div class="rh" style="top:152.0px;color:#444">180009</div>
<div class="cell" style="left:56.5px;top:153.5px;width:191px">Jung, Jaehun</div>
<div class="cell" style="left:251.5px;top:153.5px;width:192px">Gachon University</div>
<div class="cell" style="left:447.5px;top:153.5px;width:191px">kor</div>
<div class="cell num" style="left:639px;top:153.0px;width:74px">108</div>
<div class="cell num" style="left:717px;top:153.0px;width:74px">2013</div>
<div class="cell num" style="left:795px;top:153.0px;width:73px">2024</div>
<div class="cell num" style="left:872px;top:153.0px;width:74px">225,176</div>
<div class="cell num" style="left:950px;top:153.0px;width:74px">319</div>
<div class="cell num" style="left:1028px;top:153.0px;width:74px">8</div>
<div class="cell num" style="left:1106px;top:153.0px;width:74px">3.9888</div>
<div class="cell num" style="left:1184px;top:153.0px;width:74px">5</div>
<div class="rh" style="top:174.5px;color:#444">180010</div>
<div class="cell" style="left:56.5px;top:176.0px;width:191px">Guan, Xinrong</div>
<div class="cell" style="left:251.5px;top:176.0px;width:192px">Logistical Engineering University</div>
<div class="cell" style="left:447.5px;top:176.0px;width:191px">chn</div>
<div class="cell num" style="left:639px;top:175.5px;width:74px">56</div>
<div class="cell num" style="left:717px;top:175.5px;width:74px">2010</div>
<div class="cell num" style="left:795px;top:175.5px;width:73px">2024</div>
<div class="cell num" style="left:872px;top:175.5px;width:74px">225,178</div>
<div class="cell num" style="left:950px;top:175.5px;width:74px">334</div>
<div class="cell num" style="left:1028px;top:175.5px;width:74px">9</div>
<div class="cell num" style="left:1106px;top:175.5px;width:74px">4.3262</div>
<div class="cell num" style="left:1184px;top:175.5px;width:74px">0</div>
<div class="rh" style="top:197.0px;color:#444">180011</div>
<div class="cell" style="left:56.5px;top:198.5px;width:191px">Nguyen, Van Dinh</div>
<div class="cell" style="left:251.5px;top:198.5px;width:192px">VinUniversity</div>
<div class="cell" style="left:447.5px;top:198.5px;width:191px">vnm</div>
<div class="cell num" style="left:639px;top:198.0px;width:74px">149</div>
<div class="cell num" style="left:717px;top:198.0px;width:74px">1981</div>
<div class="cell num" style="left:795px;top:198.0px;width:73px">2024</div>
<div class="cell num" style="left:872px;top:198.0px;width:74px">225,182</div>
<div class="cell num" style="left:950px;top:198.0px;width:74px">413</div>
<div class="cell num" style="left:1028px;top:198.0px;width:74px">9</div>
<div class="cell num" style="left:1106px;top:198.0px;width:74px">4.1185</div>
<div class="cell num" style="left:1184px;top:198.0px;width:74px">3</div>
<div class="rh" style="top:219.5px;color:#444">180012</div>
<div class="cell" style="left:56.5px;top:221.0px;width:191px">Taherkordi, Amir</div>
<div class="cell" style="left:251.5px;top:221.0px;width:192px">Universitetet i Oslo</div>
<div class="cell" style="left:447.5px;top:221.0px;width:191px">nor</div>
<div class="cell num" style="left:639px;top:220.5px;width:74px">93</div>
<div class="cell num" style="left:717px;top:220.5px;width:74px">2006</div>
<div class="cell num" style="left:795px;top:220.5px;width:73px">2024</div>
<div class="cell num" style="left:872px;top:220.5px;width:74px">225,183</div>
<div class="cell num" style="left:950px;top:220.5px;width:74px">851</div>
<div class="cell num" style="left:1028px;top:220.5px;width:74px">12</div>
<div class="cell num" style="left:1106px;top:220.5px;width:74px">4.9690</div>
<div class="cell num" style="left:1184px;top:220.5px;width:74px">0</div>
<div class="rh" style="top:242.0px;color:#444">180013</div>
<div class="cell" style="left:56.5px;top:243.5px;width:191px">Elliott, Sean P.</div>
<div class="cell" style="left:251.5px;top:243.5px;width:192px">University of Minnesota Twin Cities</div>
<div class="cell" style="left:447.5px;top:243.5px;width:191px">usa</div>
<div class="cell num" style="left:639px;top:243.0px;width:74px">312</div>
<div class="cell num" style="left:717px;top:243.0px;width:74px">1999</div>
<div class="cell num" style="left:795px;top:243.0px;width:73px">2024</div>
<div class="cell num" style="left:872px;top:243.0px;width:74px">225,185</div>
<div class="cell num" style="left:950px;top:243.0px;width:74px">452</div>
<div class="cell num" style="left:1028px;top:243.0px;width:74px">9</div>
<div class="cell num" style="left:1106px;top:243.0px;width:74px">4.9029</div>
<div class="cell num" style="left:1184px;top:243.0px;width:74px">98</div>
<div class="rh" style="top:264.5px;color:#444">180014</div>
<div class="cell" style="left:56.5px;top:266.0px;width:191px">Sherif, Mohsen</div>
<div class="cell" style="left:251.5px;top:266.0px;width:192px">United Arab Emirates University</div>
<div class="cell" style="left:447.5px;top:266.0px;width:191px">are</div>
<div class="cell num" style="left:639px;top:265.5px;width:74px">124</div>
<div class="cell num" style="left:717px;top:265.5px;width:74px">1988</div>
<div class="cell num" style="left:795px;top:265.5px;width:73px">2024</div>
<div class="cell num" style="left:872px;top:265.5px;width:74px">225,189</div>
<div class="cell num" style="left:950px;top:265.5px;width:74px">514</div>
<div class="cell num" style="left:1028px;top:265.5px;width:74px">12</div>
<div class="cell num" style="left:1106px;top:265.5px;width:74px">4.8765</div>
<div class="cell num" style="left:1184px;top:265.5px;width:74px">3</div>
<div class="rh" style="top:287.0px;color:#444">180015</div>
<div class="cell" style="left:56.5px;top:288.5px;width:191px">Davis, Simon</div>
<div class="cell" style="left:251.5px;top:288.5px;width:192px">DGPC</div>
<div class="cell" style="left:447.5px;top:288.5px;width:191px">prt</div>
<div class="cell num" style="left:639px;top:288.0px;width:74px">32</div>
<div class="cell num" style="left:717px;top:288.0px;width:74px">1976</div>
<div class="cell num" style="left:795px;top:288.0px;width:73px">2024</div>
<div class="cell num" style="left:872px;top:288.0px;width:74px">225,191</div>
<div class="cell num" style="left:950px;top:288.0px;width:74px">99</div>
<div class="cell num" style="left:1028px;top:288.0px;width:74px">6</div>
<div class="cell num" style="left:1106px;top:288.0px;width:74px">3.7667</div>
<div class="cell num" style="left:1184px;top:288.0px;width:74px">12</div>
<div class="rh" style="top:309.5px;color:#444">180016</div>
<div class="cell" style="left:56.5px;top:311.0px;width:191px">Liu, Hong lin</div>
<div class="cell" style="left:251.5px;top:311.0px;width:192px">Nanjing Agricultural University</div>
<div class="cell" style="left:447.5px;top:311.0px;width:191px">chn</div>
<div class="cell num" style="left:639px;top:310.5px;width:74px">232</div>
<div class="cell num" style="left:717px;top:310.5px;width:74px">2002</div>
<div class="cell num" style="left:795px;top:310.5px;width:73px">2024</div>
<div class="cell num" style="left:872px;top:310.5px;width:74px">225,192</div>
<div class="cell num" style="left:950px;top:310.5px;width:74px">707</div>
<div class="cell num" style="left:1028px;top:310.5px;width:74px">11</div>
<div class="cell num" style="left:1106px;top:310.5px;width:74px">5.9482</div>
<div class="cell num" style="left:1184px;top:310.5px;width:74px">0</div>
<div class="rh" style="top:332.0px;color:#217346">180017</div>
<div class="cell" style="left:56.5px;top:333.5px;width:191px">Ansari, Mojtaba</div>
<div class="cell" style="left:251.5px;top:333.5px;width:192px">Meybod University</div>
<div class="cell" style="left:447.5px;top:333.5px;width:191px">irn</div>
<div class="cell num" style="left:639px;top:333.0px;width:74px">32</div>
<div class="cell num" style="left:717px;top:333.0px;width:74px">2011</div>
<div class="cell num" style="left:795px;top:333.0px;width:73px">2024</div>
<div class="cell num" style="left:872px;top:333.0px;width:74px">225,202</div>
<div class="cell num" style="left:950px;top:333.0px;width:74px">147</div>
<div class="cell num" style="left:1028px;top:333.0px;width:74px">4</div>
<div class="cell num" style="left:1106px;top:333.0px;width:74px">2.8500</div>
<div class="cell num" style="left:1184px;top:333.0px;width:74px">2</div>
<div class="rh" style="top:354.5px;color:#444">180018</div>
<div class="cell" style="left:56.5px;top:356.0px;width:191px">Holst, Bodil Ström</div>
<div class="cell" style="left:251.5px;top:356.0px;width:192px">Sveriges lantbruksuniversitet</div>
<div class="cell" style="left:447.5px;top:356.0px;width:191px">swe</div>
<div class="cell num" style="left:639px;top:355.5px;width:74px">98</div>
<div class="cell num" style="left:717px;top:355.5px;width:74px">1993</div>
<div class="cell num" style="left:795px;top:355.5px;width:73px">2024</div>
<div class="cell num" style="left:872px;top:355.5px;width:74px">225,205</div>
<div class="cell num" style="left:950px;top:355.5px;width:74px">224</div>
<div class="cell num" style="left:1028px;top:355.5px;width:74px">7</div>
<div class="cell num" style="left:1106px;top:355.5px;width:74px">4.3345</div>
<div class="cell num" style="left:1184px;top:355.5px;width:74px">2</div>
<div class="rh" style="top:377.0px;color:#444">180019</div>
<div class="cell" style="left:56.5px;top:378.5px;width:191px">Sukyai, Prakit</div>
<div class="cell" style="left:251.5px;top:378.5px;width:192px">Kasetsart University</div>
<div class="cell" style="left:447.5px;top:378.5px;width:191px">tha</div>
<div class="cell num" style="left:639px;top:378.0px;width:74px">60</div>
<div class="cell num" style="left:717px;top:378.0px;width:74px">2005</div>
<div class="cell num" style="left:795px;top:378.0px;width:73px">2024</div>
<div class="cell num" style="left:872px;top:378.0px;width:74px">225,206</div>
<div class="cell num" style="left:950px;top:378.0px;width:74px">390</div>
<div class="cell num" style="left:1028px;top:378.0px;width:74px">12</div>
<div class="cell num" style="left:1106px;top:378.0px;width:74px">5.1115</div>
<div class="cell num" style="left:1184px;top:378.0px;width:74px">0</div>
<div class="rh" style="top:399.5px;color:#444">180020</div>
<div class="cell" style="left:56.5px;top:401.0px;width:191px">Amin, Mohammad</div>
<div class="cell" style="left:251.5px;top:401.0px;width:192px">Enchanted Rock Management</div>
<div class="cell" style="left:447.5px;top:401.0px;width:191px">usa</div>
<div class="cell num" style="left:639px;top:400.5px;width:74px">46</div>
<div class="cell num" style="left:717px;top:400.5px;width:74px">2009</div>
<div class="cell num" style="left:795px;top:400.5px;width:73px">2024</div>
<div class="cell num" style="left:872px;top:400.5px;width:74px">225,207</div>
<div class="cell num" style="left:950px;top:400.5px;width:74px">192</div>
<div class="cell num" style="left:1028px;top:400.5px;width:74px">8</div>
<div class="cell num" style="left:1106px;top:400.5px;width:74px">4.1167</div>
<div class="cell num" style="left:1184px;top:400.5px;width:74px">2</div>
<div class="rh" style="top:422.0px;color:#444">180021</div>
<div class="cell" style="left:56.5px;top:423.5px;width:191px">Chen, Yue</div>
<div class="cell" style="left:251.5px;top:423.5px;width:192px">University of Minnesota Twin Cities</div>
<div class="cell" style="left:447.5px;top:423.5px;width:191px">usa</div>
<div class="cell num" style="left:639px;top:423.0px;width:74px">81</div>
<div class="cell num" style="left:717px;top:423.0px;width:74px">2002</div>
<div class="cell num" style="left:795px;top:423.0px;width:73px">2024</div>
<div class="cell num" style="left:872px;top:423.0px;width:74px">225,209</div>
<div class="cell num" style="left:950px;top:423.0px;width:74px">842</div>
<div class="cell num" style="left:1028px;top:423.0px;width:74px">14</div>
<div class="cell num" style="left:1106px;top:423.0px;width:74px">3.9268</div>
<div class="cell num" style="left:1184px;top:423.0px;width:74px">1</div>
<div class="rh" style="top:444.5px;color:#444">180022</div>
<div class="cell" style="left:56.5px;top:446.0px;width:191px">Nielsen, Søren</div>
<div class="cell" style="left:251.5px;top:446.0px;width:192px">Psychiatric Research Unit</div>
<div class="cell" style="left:447.5px;top:446.0px;width:191px">dnk</div>
<div class="cell num" style="left:639px;top:445.5px;width:74px">109</div>
<div class="cell num" style="left:717px;top:445.5px;width:74px">1985</div>
<div class="cell num" style="left:795px;top:445.5px;width:73px">2024</div>
<div class="cell num" style="left:872px;top:445.5px;width:74px">225,210</div>
<div class="cell num" style="left:950px;top:445.5px;width:74px">410</div>
<div class="cell num" style="left:1028px;top:445.5px;width:74px">6</div>
<div class="cell num" style="left:1106px;top:445.5px;width:74px">3.4099</div>
<div class="cell num" style="left:1184px;top:445.5px;width:74px">11</div>
<div class="rh" style="top:467.0px;color:#444">180023</div>
<div class="cell" style="left:56.5px;top:468.5px;width:191px">Heiss, Wolfgang</div>
<div class="cell" style="left:251.5px;top:468.5px;width:192px">Friedrich-Alexander-Universität</div>
<div class="cell" style="left:447.5px;top:468.5px;width:191px">deu</div>
<div class="cell num" style="left:639px;top:468.0px;width:74px">226</div>
<div class="cell num" style="left:717px;top:468.0px;width:74px">1991</div>
<div class="cell num" style="left:795px;top:468.0px;width:73px">2024</div>
<div class="cell num" style="left:872px;top:468.0px;width:74px">225,211</div>
<div class="cell num" style="left:950px;top:468.0px;width:74px">893</div>
<div class="cell num" style="left:1028px;top:468.0px;width:74px">12</div>
<div class="cell num" style="left:1106px;top:468.0px;width:74px">4.1436</div>
<div class="cell num" style="left:1184px;top:468.0px;width:74px">0</div>
<div class="rh" style="top:489.5px;color:#444">180024</div>
<div class="cell" style="left:56.5px;top:491.0px;width:191px">Wojcieszyńska, Danuta</div>
<div class="cell" style="left:251.5px;top:491.0px;width:192px">Uniwersytet Śląski w Katowicach</div>
<div class="cell" style="left:447.5px;top:491.0px;width:191px">pol</div>
<div class="cell num" style="left:639px;top:490.5px;width:74px">70</div>
<div class="cell num" style="left:717px;top:490.5px;width:74px">2005</div>
<div class="cell num" style="left:795px;top:490.5px;width:73px">2024</div>
<div class="cell num" style="left:872px;top:490.5px;width:74px">225,213</div>
<div class="cell num" style="left:950px;top:490.5px;width:74px">382</div>
<div class="cell num" style="left:1028px;top:490.5px;width:74px">9</div>
<div class="cell num" style="left:1106px;top:490.5px;width:74px">5.2429</div>
<div class="cell num" style="left:1184px;top:490.5px;width:74px">0</div>
<div class="rh" style="top:512.0px;color:#444">180025</div>
<div class="cell" style="left:56.5px;top:513.5px;width:191px">MacEwen, E. Gregory</div>
<div class="cell" style="left:251.5px;top:513.5px;width:192px">University of Wisconsin School</div>
<div class="cell" style="left:447.5px;top:513.5px;width:191px">usa</div>
<div class="cell num" style="left:639px;top:513.0px;width:74px">111</div>
<div class="cell num" style="left:717px;top:513.0px;width:74px">1974</div>
<div class="cell num" style="left:795px;top:513.0px;width:73px">2011</div>
<div class="cell num" style="left:872px;top:513.0px;width:74px">225,216</div>
<div class="cell num" style="left:950px;top:513.0px;width:74px">200</div>
<div class="cell num" style="left:1028px;top:513.0px;width:74px">7</div>
<div class="cell num" style="left:1106px;top:513.0px;width:74px">3.8234</div>
<div class="cell num" style="left:1184px;top:513.0px;width:74px">9</div>
<div class="rh" style="top:534.5px;color:#444">180026</div>
<div class="cell" style="left:56.5px;top:536.0px;width:191px">Oksanen, Tuula</div>
<div class="cell" style="left:251.5px;top:536.0px;width:192px">Itä-Suomen yliopisto</div>
<div class="cell" style="left:447.5px;top:536.0px;width:191px">fin</div>
<div class="cell num" style="left:639px;top:535.5px;width:74px">201</div>
<div class="cell num" style="left:717px;top:535.5px;width:74px">1996</div>
<div class="cell num" style="left:795px;top:535.5px;width:73px">2024</div>
<div class="cell num" style="left:872px;top:535.5px;width:74px">225,218</div>
<div class="cell num" style="left:950px;top:535.5px;width:74px">1,100</div>
<div class="cell num" style="left:1028px;top:535.5px;width:74px">15</div>
<div class="cell num" style="left:1106px;top:535.5px;width:74px">4.8205</div>
<div class="cell num" style="left:1184px;top:535.5px;width:74px">0</div>
<div class="a" style="left:0;top:561px;width:1280px;height:17px;background:#e6ebe8"></div>
<div class="a" style="left:0;top:561px;width:134px;height:30px;background:#dfe7e8;border-radius:0 6px 0 0"></div>
<div class="a" style="left:134px;top:561px;width:42px;height:30px;background:#fff"></div>
<div class="a" style="left:176px;top:561px;width:1104px;height:30px;background:linear-gradient(90deg,#dfe7e9 0px,#e0e8e6 300px,#e6ebe5 600px);border-radius:6px 0 0 0"></div>
<div class="a" style="left:130px;top:566px;width:1px;height:12px;background:#c8cfd0"></div>
<div class="a" style="left:178px;top:566px;width:1px;height:12px;background:#c8cfd0"></div>
<svg class="a" style="left:16px;top:569px" width="40" height="10" viewBox="0 0 40 10"><path d="M5 1L1.5 5L5 9M30 1L33.5 5L30 9" fill="none" stroke="#999" stroke-width="1"/></svg>
<div class="a" style="left:100px;top:567.5px;font-size:11.3px;color:#555;line-height:14px">Key</div>
<div class="a" style="left:141.5px;top:565.5px;font-size:11.5px;font-weight:bold;color:#222;line-height:14px">Data</div>
<svg class="a" style="left:215px;top:569px" width="11" height="11" viewBox="0 0 11 11"><path d="M5.5 0.5V10.5M0.5 5.5H10.5" stroke="#666" stroke-width="1"/></svg>
<svg class="a" style="left:782px;top:569px" width="4" height="9" viewBox="0 0 4 9"><circle cx="2" cy="1.5" r="0.9" fill="#555"/><circle cx="2" cy="4.5" r="0.9" fill="#555"/><circle cx="2" cy="7.5" r="0.9" fill="#555"/></svg>
<div class="a" style="left:799px;top:566.5px;width:490px;height:20px;background:#f4f4f4;border-radius:8px"></div>
<div class="a" style="left:873px;top:561px;width:407px;height:1px;background:#fde7a8"></div>
<svg class="a" style="left:802px;top:570px" width="7" height="9" viewBox="0 0 7 9"><path d="M6 1V8L1 4.5Z" fill="#666"/></svg>
<div class="a" style="left:813px;top:571px;width:146px;height:12px;background:#7a7a7a;border-radius:6px"></div>
<div class="a" style="left:1276px;top:570px;width:4px;height:8px;background:#777"></div>
</body></html>
